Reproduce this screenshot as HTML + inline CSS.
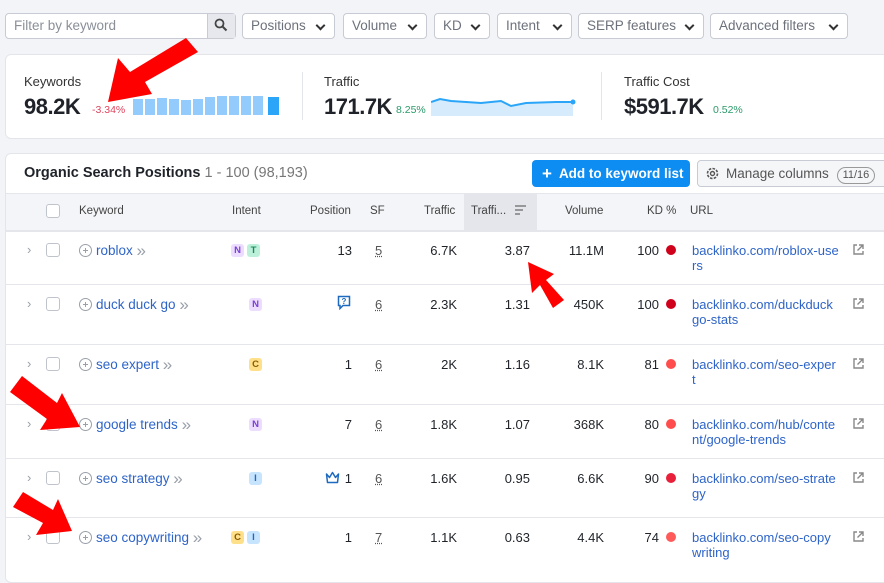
<!DOCTYPE html>
<html><head><meta charset="utf-8"><style>
*{box-sizing:border-box;margin:0;padding:0}
body{width:884px;height:568px;overflow:hidden;background:#f3f4f8;font-family:"Liberation Sans",sans-serif;color:#1f2329;position:relative;font-size:13px}
.a{position:absolute;white-space:nowrap}
.btn{position:absolute;top:13px;height:26px;border:1px solid #c8cbd3;border-radius:4px;background:#fff;color:#6c717b;font-size:13.5px;line-height:24px;padding-left:8px}
.btn:after{content:"";position:absolute;right:10px;top:8px;width:5px;height:5px;border-right:2px solid #333;border-bottom:2px solid #333;transform:rotate(45deg)}
.card{position:absolute;background:#fff;border:1px solid #e3e5ea;border-radius:6px}
.lbl{font-size:13px;color:#333}
.big{font-size:22px;font-weight:bold;letter-spacing:-0.5px}
.hd{font-size:11.5px;color:#444;top:205px}
.kw{color:#2e64c8;font-size:13.5px}
.r{text-align:right}
.badge{display:inline-block;width:13px;height:13px;border-radius:3px;font-size:9.5px;font-weight:bold;text-align:center;line-height:13px;margin-right:3px;vertical-align:top}
.N{background:#ecdcff;color:#7b3fd6}.T{background:#bdf0da;color:#1a8a5b}.C{background:#ffe08a;color:#8a5a00}.I{background:#c7e4ff;color:#1e6ac0}
.url{color:#2e64c8;font-size:13px;line-height:15px}
.dot{position:absolute;width:10px;height:10px;border-radius:50%}
.cb{position:absolute;width:14px;height:14px;border:1px solid #bfc3cc;border-radius:3px;background:#fff}
.line{position:absolute;left:6px;right:0;height:1px;background:#e4e6eb}
.plus{display:inline-block;width:13px;height:13px;border:1.5px solid #9aa0aa;border-radius:50%;position:relative;vertical-align:-2px;margin-right:4px}
.plus:before{content:"";position:absolute;left:2.5px;top:4.5px;width:5px;height:1.5px;background:#9aa0aa}
.plus:after{content:"";position:absolute;left:4.5px;top:2.5px;width:1.5px;height:5px;background:#9aa0aa}
.chev{color:#9aa0aa;font-size:13px}
.dch{color:#9aa0aa;font-size:17px;line-height:13px;vertical-align:-1px}
.sf{text-decoration:underline dotted;color:#555}
</style></head><body>
<div class="a" style="left:5px;top:13px;width:231px;height:26px;border:1px solid #c8cbd3;border-radius:4px;background:#fff"></div>
<div class="a" style="left:14px;top:18px;color:#8a8f98;font-size:13.5px">Filter by keyword</div>
<div class="a" style="left:207px;top:14px;width:28px;height:24px;background:#e6e8ee;border-left:1px solid #c8cbd3"></div>
<svg class="a" style="left:214px;top:18px" width="14" height="14"><circle cx="5.5" cy="5.5" r="4" fill="none" stroke="#444" stroke-width="1.8"/><line x1="8.5" y1="8.5" x2="12.5" y2="12.5" stroke="#444" stroke-width="2"/></svg>
<div class="btn" style="left:242px;width:93px">Positions</div>
<div class="btn" style="left:343px;width:84px">Volume</div>
<div class="btn" style="left:434px;width:56px">KD</div>
<div class="btn" style="left:497px;width:75px">Intent</div>
<div class="btn" style="left:578px;width:126px">SERP features</div>
<div class="btn" style="left:710px;width:138px">Advanced filters</div>
<div class="card" style="left:5px;top:54px;width:890px;height:85px"></div>
<div class="a lbl" style="left:24px;top:74px">Keywords</div>
<div class="a big" style="left:24px;top:94px">98.2K</div>
<div class="a" style="left:92px;top:104px;font-size:10.5px;color:#e0455e">-3.34%</div>
<svg class="a" style="left:133px;top:96px" width="148" height="19">
<g fill="#92cbfc"><rect x="0" y="3" width="10" height="16"/><rect x="12" y="3" width="10" height="16"/><rect x="24" y="2" width="10" height="17"/><rect x="36" y="3" width="10" height="16"/><rect x="48" y="4" width="10" height="15"/><rect x="60" y="3" width="10" height="16"/><rect x="72" y="1" width="10" height="18"/><rect x="84" y="0" width="10" height="19"/><rect x="96" y="0" width="10" height="19"/><rect x="108" y="0" width="10" height="19"/><rect x="120" y="0" width="10" height="19"/></g><rect x="135" y="1" width="11" height="18" fill="#2aa5f8"/></svg>
<div class="a" style="left:302px;top:72px;width:1px;height:48px;background:#e3e5ea"></div>
<div class="a lbl" style="left:324px;top:74px">Traffic</div>
<div class="a big" style="left:324px;top:94px">171.7K</div>
<div class="a" style="left:396px;top:104px;font-size:10.5px;color:#2b9a6a">8.25%</div>
<svg class="a" style="left:431px;top:95px" width="146" height="21"><path d="M0,7 L9,4 L20,6 L50,8 L70,6 L80,11 L95,8 L125,7 L142,7 L142,21 L0,21Z" fill="#d6ecfc"/><path d="M0,7 L9,4 L20,6 L50,8 L70,6 L80,11 L95,8 L125,7 L142,7" fill="none" stroke="#2aa5f8" stroke-width="2"/><circle cx="142" cy="7" r="2.5" fill="#2aa5f8"/></svg>
<div class="a" style="left:601px;top:72px;width:1px;height:48px;background:#e3e5ea"></div>
<div class="a lbl" style="left:624px;top:74px">Traffic Cost</div>
<div class="a big" style="left:624px;top:94px">$591.7K</div>
<div class="a" style="left:713px;top:104px;font-size:10.5px;color:#2b9a6a">0.52%</div>
<div class="card" style="left:5px;top:153px;width:890px;height:430px"></div>
<div class="a" style="left:24px;top:165px;font-size:14.5px;font-weight:bold">Organic Search Positions <span style="font-weight:normal;color:#777">1 - 100 (98,193)</span></div>
<div class="a" style="left:532px;top:160px;width:158px;height:27px;background:#0d8cf1;border-radius:4px;color:#fff;font-weight:bold;font-size:13.5px;line-height:27px;padding-left:10px"><span style="font-size:17px;vertical-align:-1px">+</span>&nbsp; Add to keyword list</div>
<div class="a" style="left:697px;top:160px;width:195px;height:27px;border:1px solid #c8cbd3;border-radius:4px;background:#f5f6f8;color:#555;font-size:13.5px;line-height:25px;padding-left:28px">Manage columns <span style="display:inline-block;border:1px solid #999;border-radius:9px;font-size:11px;line-height:15px;padding:0 5px;margin-left:4px">11/16</span></div>
<svg class="a" style="left:705px;top:166px" width="15" height="15"><circle cx="7.5" cy="7.5" r="5" fill="none" stroke="#555" stroke-width="1.6" stroke-dasharray="2.6 1.3"/><circle cx="7.5" cy="7.5" r="2" fill="none" stroke="#555" stroke-width="1.4"/></svg>
<div class="a" style="left:6px;top:193px;width:878px;height:37px;background:#f4f5f8;border-top:1px solid #e4e6eb"></div>
<div class="a" style="left:464px;top:193px;width:73px;height:37px;background:#e4e6ec"></div>
<div class="cb" style="left:46px;top:204px"></div>
<div class="a hd" style="left:79px">Keyword</div>
<div class="a hd" style="left:232px">Intent</div>
<div class="a hd" style="left:310px">Position</div>
<div class="a hd" style="left:370px">SF</div>
<div class="a hd" style="left:424px">Traffic</div>
<div class="a hd" style="left:471px">Traffi...</div>
<svg class="a" style="left:515px;top:205px" width="12" height="10"><g stroke="#777" stroke-width="1.4"><line x1="0" y1="1" x2="11" y2="1"/><line x1="0" y1="5" x2="8" y2="5"/><line x1="0" y1="9" x2="5" y2="9"/></g></svg>
<div class="a hd" style="left:565px">Volume</div>
<div class="a hd" style="left:647px">KD %</div>
<div class="a hd" style="left:690px">URL</div>
<div class="line" style="top:230px;height:2px"></div>
<div class="line" style="top:284px"></div><div class="line" style="top:344px"></div><div class="line" style="top:404px"></div><div class="line" style="top:458px"></div><div class="line" style="top:517px"></div>
<div id="rows"></div>
<script>
const rows=[
[243,"roblox",["N","T"],"13","5","6.7K","3.87","11.1M","100","#d0021b",["backlinko.com/roblox-use","rs"],null],
[297,"duck duck go",["N"],"","6","2.3K","1.31","450K","100","#d0021b",["backlinko.com/duckduck","go-stats"],"q"],
[357,"seo expert",["C"],"1","6","2K","1.16","8.1K","81","#ff4d4d",["backlinko.com/seo-exper","t"],null],
[417,"google trends",["N"],"7","6","1.8K","1.07","368K","80","#ff4d4d",["backlinko.com/hub/conte","nt/google-trends"],null],
[471,"seo strategy",["I"],"1","6","1.6K","0.95","6.6K","90","#e8203a",["backlinko.com/seo-strate","gy"],"c"],
[530,"seo copywriting",["C","I"],"1","7","1.1K","0.63","4.4K","74","#ff5a5a",["backlinko.com/seo-copy","writing"],null]];
let h="";
for(const r of rows){const y=r[0];
h+=`<div class="a chev" style="left:27px;top:${y-1}px">›</div><div class="cb" style="left:46px;top:${y}px"></div>`;
h+=`<div class="a kw" style="left:79px;top:${y}px"><span class="plus"></span>${r[1]} <span class="dch">»</span></div>`;
let bx=r[2].length==2?231:249;
h+=`<div class="a" style="left:${bx}px;top:${y+1}px;line-height:13px;height:13px">`+r[2].map(b=>`<span class="badge ${b}">${b}</span>`).join("")+`</div>`;
h+=`<div class="a r" style="right:${884-352}px;top:${y}px">${r[3]}</div>`;
if(r[11]=="q")h+=`<svg class="a" style="left:337px;top:${y-2}px" width="14" height="15"><path d="M1.5,1.5 H12.5 V10.5 H6 L3,13.5 V10.5 H1.5Z" fill="none" stroke="#1e6ac0" stroke-width="1.5"/><text x="7" y="9" font-size="8" text-anchor="middle" fill="#1e6ac0" font-family="Liberation Sans" font-weight="bold">?</text></svg>`;
if(r[11]=="c")h+=`<svg class="a" style="left:325px;top:${y}px" width="15" height="13"><path d="M1.5,3 L4.5,6.5 L7.5,1.5 L10.5,6.5 L13.5,3 L12.5,11.5 H2.5Z" fill="none" stroke="#1e6ac0" stroke-width="1.5" stroke-linejoin="round"/></svg>`;
h+=`<div class="a sf" style="left:375px;top:${y}px">${r[4]}</div>`;
h+=`<div class="a r" style="right:${884-457}px;top:${y}px">${r[5]}</div>`;
h+=`<div class="a r" style="right:${884-530}px;top:${y}px">${r[6]}</div>`;
h+=`<div class="a r" style="right:${884-604}px;top:${y}px">${r[7]}</div>`;
h+=`<div class="a r" style="right:${884-659}px;top:${y}px">${r[8]}</div>`;
h+=`<div class="dot" style="left:666px;top:${y+2}px;background:${r[9]}"></div>`;
h+=`<div class="a url" style="left:692px;top:${y}px">${r[10][0]}<br>${r[10][1]}</div>`;
h+=`<svg class="a" style="left:852px;top:${y}px" width="13" height="13"><path d="M5,2 H2 V11 H11 V8 M7,2 H11 V6 M11,2 L5.5,7.5" fill="none" stroke="#888" stroke-width="1.4"/></svg>`;
}
document.getElementById("rows").innerHTML=h;
</script>
<svg class="a" style="left:0;top:0" width="884" height="568">
<g fill="#f00">
<polygon points="186,38 198,52 145,82 152,94 108,102 118,58 130,72"/>
<polygon points="564,300 553,308 540,285 532,293 528,262 554,274 546,280"/>
<polygon points="10,392 22,376 57,403 62,393 80,427 40,430 47,419"/>
<polygon points="13,507 23,492 53,510 58,499 72,531 36,535 43,523"/>
</g></svg>
</body></html>
